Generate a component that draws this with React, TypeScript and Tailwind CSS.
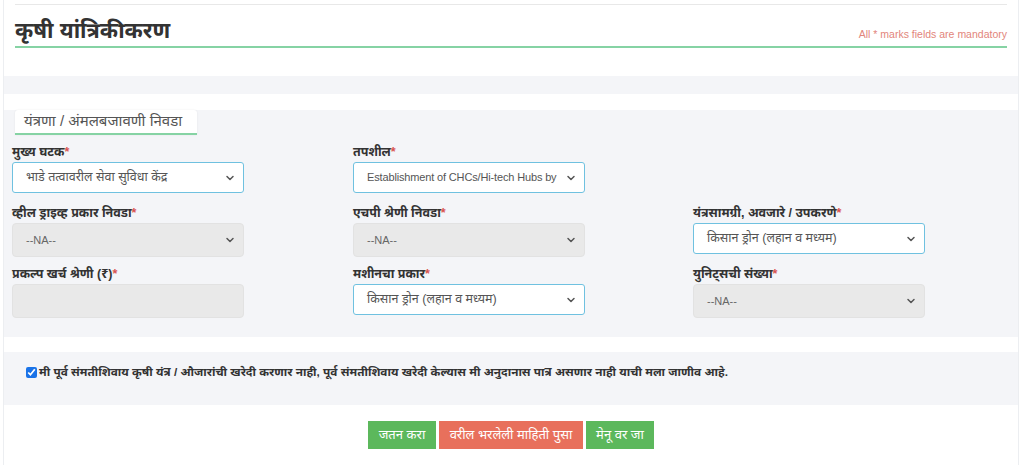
import React from "react";

const FONT = { fontFamily: '"Liberation Sans", "Noto Sans", "Noto Sans Devanagari", Lohit, sans-serif' };

function Chevron() {
  return (
    <svg width="10" height="10" viewBox="0 0 10 10" className="shrink-0">
      <path d="M2 3.5 L5 6.5 L8 3.5" fill="none" stroke="#555" strokeWidth="1.5" strokeLinecap="round" strokeLinejoin="round" />
    </svg>
  );
}

type FieldProps = { label: string; value?: string; kind: "active" | "disabled" | "input"; latin?: boolean };

function Field({ label, value, kind, latin }: FieldProps) {
  const textCls = latin ? "text-[11px] tracking-[-0.15px]" : "text-[12.5px]";
  return (
    <div className="h-[61px] w-[232px]">
      <div className="h-[18px] text-[12.5px] font-bold leading-[16px] text-[#333]">
        {label}
        <span className="text-[#d9534f]">*</span>
      </div>
      {kind === "active" ? (
        <div className={`flex h-[31px] items-center justify-between rounded-[3px] border-[1.5px] border-[#6fc1e0] bg-white pl-[13px] pr-[8px] text-[#555] ${textCls}`}>
          <span className="whitespace-nowrap">{value}</span>
          <Chevron />
        </div>
      ) : (
        <div className="flex h-[34px] items-center justify-between rounded-[4px] border border-[#e2e2e2] bg-[#e9e9e9] pl-[13px] pr-[8px] text-[11px] text-[#666]">
          <span>{value}</span>
          {kind === "disabled" ? <Chevron /> : null}
        </div>
      )}
    </div>
  );
}

export default function App() {
  return (
    <div className="min-h-[465px] bg-white" style={FONT}>
      <div className="ml-[3px] min-h-[465px] w-[1016px] border-x border-[#eceef1]">
        <div className="mx-[11px] pt-[4px]">
          <div className="h-[1px] bg-[#e8e8e8]" />
          <div className="flex items-end justify-between border-b-2 border-[#86d3a4] pb-[1px] pt-[12px]">
            <h1 className="text-[22px] font-bold leading-[28px] text-[#333]">कृषी यांत्रिकीकरण</h1>
            <span className="pb-[5px] text-[10.5px] leading-[12px] text-[#e2857b]">All * marks fields are mandatory</span>
          </div>
        </div>
        <div className="h-[28px]" />
        <div className="h-[18px] bg-[#f4f5f8]" />
        <div className="h-[28px]" />
        <div className="bg-[#f4f5f8] px-[8px] pb-[10px]">
          <div className="-mt-[12px] ml-[3px] flex h-[25px] w-[182px] items-center rounded-t-[3px] border-b-2 border-[#86d3a4] bg-white pl-[9px] text-[15px] text-[#555] shadow-[0_0_2px_rgba(0,0,0,0.08)]">
            यंत्रणा / अंमलबजावणी निवडा
          </div>
          <div className="mt-[9px] grid grid-cols-[341px_340px_300px]">
            <Field label="मुख्य घटक" value="भाडे तत्वावरील सेवा सुविधा केंद्र" kind="active" />
            <Field label="तपशील" value="Establishment of CHCs/Hi-tech Hubs by" kind="active" latin />
            <div />
            <Field label="व्हील ड्राइव्ह प्रकार निवडा" value="--NA--" kind="disabled" />
            <Field label="एचपी श्रेणी निवडा" value="--NA--" kind="disabled" />
            <Field label="यंत्रसामग्री, अवजारे / उपकरणे" value="किसान ड्रोन (लहान व मध्यम)" kind="active" />
            <Field label="प्रकल्प खर्च श्रेणी (₹)" kind="input" />
            <Field label="मशीनचा प्रकार" value="किसान ड्रोन (लहान व मध्यम)" kind="active" />
            <Field label="युनिट्सची संख्या" value="--NA--" kind="disabled" />
          </div>
        </div>
        <div className="h-[15px]" />
        <div className="flex h-[53px] items-start bg-[#f4f5f8] pl-[22px] pt-[12px]">
          <label className="flex items-center gap-[2px] text-[11.8px] font-bold leading-[16px] text-[#333]">
            <input type="checkbox" defaultChecked className="h-[11px] w-[11px] accent-[#1a73e8]" />
            मी पूर्व संमतीशिवाय कृषी यंत्र / औजारांची खरेदी करणार नाही, पूर्व संमतीशिवाय खरेदी केल्यास मी अनुदानास पात्र असणार नाही याची मला जाणीव आहे.
          </label>
        </div>
        <div className="flex justify-center gap-[3px] pt-[16px]">
          <button className="h-[28px] w-[68px] bg-[#5cb85c] text-[13px] text-white">जतन करा</button>
          <button className="h-[28px] w-[144px] bg-[#e8705c] text-[13px] text-white">वरील भरलेली माहिती पुसा</button>
          <button className="h-[28px] w-[68px] bg-[#5cb85c] text-[13px] text-white">मेनू वर जा</button>
        </div>
      </div>
    </div>
  );
}
